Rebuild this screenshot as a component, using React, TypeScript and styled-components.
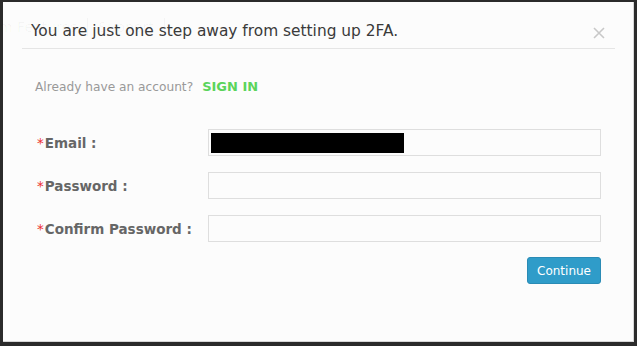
import React from "react";
import styled, { createGlobalStyle } from "styled-components";

const Global = createGlobalStyle`
  html, body { margin: 0; padding: 0; background: #2b2b2b; }
  body { font-family: "DejaVu Sans", Verdana, sans-serif; }
  * { box-sizing: border-box; }
`;

const Page = styled.div`
  width: 637px;
  height: 346px;
  padding: 2px 3px 4px 3px;
  background: #2b2b2b;
`;

const Modal = styled.div`
  position: relative;
  width: 631px;
  height: 340px;
  background: #fcfcfc;
  border-right: 1px solid #d6d6d6;
  border-bottom: 1px solid #d6d6d6;
  display: flex;
  flex-direction: column;
`;

const Ghost = styled.div`
  position: absolute;
  left: -14px;
  top: 16px;
  display: flex;
  font-size: 14px;
  line-height: 18px;
  color: rgba(0, 0, 0, 0.035);
  pointer-events: none;
`;

const GhostItem = styled.span`
  padding: 0 10px;
  border-right: 1px solid rgba(0, 0, 0, 0.03);
`;

const Header = styled.div`
  position: relative;
  height: 47px;
  margin: 0 18px 0 19px;
  padding: 20px 0 0 9px;
  border-bottom: 1px solid #e5e5e5;
`;

const Title = styled.h4`
  margin: 0;
  font-size: 15.4px;
  line-height: 18px;
  font-weight: normal;
  color: #3a3a3a;
`;

const Close = styled.button`
  position: absolute;
  right: 9px;
  top: 24px;
  width: 14px;
  height: 14px;
  padding: 0;
  border: 0;
  background: none;
  display: flex;
  align-items: center;
  justify-content: center;
`;

const Body = styled.div`
  padding: 30px 32px 0 34px;
  display: flex;
  flex-direction: column;
`;

const SignInLine = styled.div`
  margin-left: -2px;
  font-size: 12.2px;
  line-height: 16px;
  color: #999;
`;

const SignIn = styled.a`
  margin-left: 9px;
  font-size: 13px;
  font-weight: bold;
  color: #5bd45b;
  text-decoration: none;
`;

const Form = styled.form`
  margin-top: 34px;
  display: flex;
  flex-direction: column;
  gap: 16px;
`;

const Row = styled.div`
  display: grid;
  grid-template-columns: 171px 1fr;
  align-items: center;
`;

const Label = styled.label`
  font-size: 13.5px;
  font-weight: bold;
  color: #666;
  line-height: 18px;
  white-space: nowrap;
`;

const Star = styled.span`
  color: #ee3333;
  font-weight: normal;
  margin-right: 1px;
`;

const Field = styled.div`
  height: 27px;
  border: 1px solid #dedede;
  background: #fcfcfc;
  padding: 3px 2px;
`;

const Redaction = styled.div<{ $w: number }>`
  width: ${(p) => p.$w}px;
  height: 20px;
  background: #000;
`;

const Actions = styled.div`
  margin-top: -1px;
  display: flex;
  justify-content: flex-end;
`;

const Button = styled.button`
  width: 74px;
  height: 27px;
  padding: 0;
  background: #2f9cc9;
  border: 1px solid #2a8bb5;
  border-radius: 3px;
  color: #fff;
  font-family: "DejaVu Sans", Verdana, sans-serif;
  font-size: 12px;
  line-height: 16px;
`;

const fields = [
  { label: "Email :", redacted: 193 },
  { label: "Password :", redacted: 0 },
  { label: "Confirm Password :", redacted: 0 },
];

export default function App() {
  return (
    <>
      <Global />
      <Page>
        <Modal>
          <Ghost>
            <GhostItem>m Features</GhostItem>
            <GhostItem>Support</GhostItem>
          </Ghost>
          <Header>
            <Title>You are just one step away from setting up 2FA.</Title>
            <Close aria-label="Close">
              <svg width="12" height="12" viewBox="0 0 12 12">
                <path d="M1 1 L11 11 M11 1 L1 11" stroke="#c8c8c8" strokeWidth="1.6" />
              </svg>
            </Close>
          </Header>
          <Body>
            <SignInLine>
              Already have an account?
              <SignIn href="#">SIGN IN</SignIn>
            </SignInLine>
            <Form onSubmit={(e) => e.preventDefault()}>
              {fields.map((f) => (
                <Row key={f.label}>
                  <Label>
                    <Star>*</Star>
                    {f.label}
                  </Label>
                  <Field>{f.redacted > 0 && <Redaction $w={f.redacted} />}</Field>
                </Row>
              ))}
              <Actions>
                <Button type="submit">Continue</Button>
              </Actions>
            </Form>
          </Body>
        </Modal>
      </Page>
    </>
  );
}
